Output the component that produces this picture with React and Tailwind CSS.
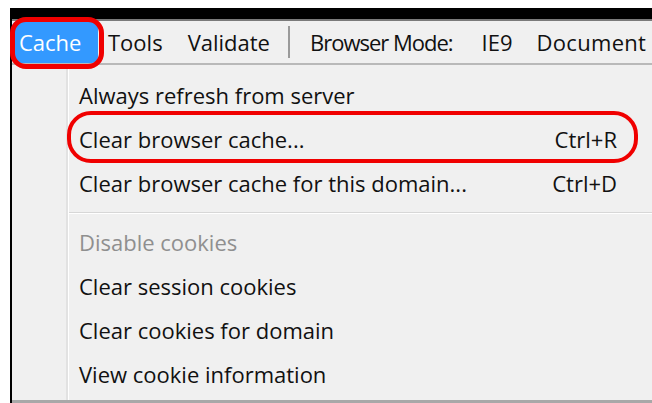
import React from "react";

const menuItems = [
  { label: "Always refresh from server" },
  { label: "Clear browser cache...", shortcut: "Ctrl+R", marked: true },
  { label: "Clear browser cache for this domain...", shortcut: "Ctrl+D" },
  { separator: true },
  { label: "Disable cookies", disabled: true },
  { label: "Clear session cookies" },
  { label: "Clear cookies for domain" },
  { label: "View cookie information" },
];

function MenuRow({ item }) {
  if (item.separator) {
    return (
      <div className="flex h-[15px] items-center">
        <div className="h-[2px] w-full border-t border-[#d7d7d7] border-b-white bg-white" />
      </div>
    );
  }
  return (
    <div
      className={`relative flex h-[44px] items-center pl-[10px] pr-[35px] ${
        item.disabled ? "text-[#8f8f8f]" : "text-[#111]"
      }`}
    >
      <span className="flex-1">{item.label}</span>
      {item.shortcut && <span>{item.shortcut}</span>}
      {item.marked && (
        <span className="pointer-events-none absolute top-[-6px] right-[14px] bottom-[-2px] left-[-2px] rounded-[24px] border-[4px] border-[#f00000]" />
      )}
    </div>
  );
}

export default function App() {
  return (
    <div
      className="h-[403px] w-[652px] overflow-hidden bg-white pt-[8px] pl-[10px] text-[22px] leading-none"
      style={{ fontFamily: '"Open Sans", "Noto Sans", sans-serif' }}
    >
      <div className="flex h-full flex-col border-l-[2px] border-black bg-[#f0f0f0]">
        {/* window title strip */}
        <div className="h-[11px] bg-black" />
        <div className="h-[2px] bg-[#7a7a7a]" />

        {/* menu bar */}
        <div className="flex h-[44px] items-center border-b-[2px] border-[#b9b9b9] text-[#111]">
          <div className="relative flex h-full w-[86px] items-center rounded-[6px] bg-[#3399ff] pl-[7px] text-white">
            Cache
            <span className="pointer-events-none absolute top-[-4px] right-[-6px] bottom-[-6px] left-[-2px] rounded-[16px] border-[5px] border-[#f00000]" />
          </div>
          <span className="ml-[10px]">Tools</span>
          <span className="ml-[25px]">Validate</span>
          <span className="ml-[18px] mr-[20px] h-[32px] w-[2px] bg-[#9a9a9a]" />
          <span className="tracking-[-1px]">Browser Mode:</span>
          <span className="ml-[29px]">IE9</span>
          <span className="ml-[24px] tracking-[0.3px]">Document</span>
        </div>

        {/* dropdown */}
        <div className="flex flex-1">
          <div className="w-[56px] border-r-[2px] border-[#e2e2e2]" />
          <div className="flex-1 pt-[8px] border-l border-white">
            {menuItems.map((item, i) => (
              <MenuRow key={i} item={item} />
            ))}
          </div>
        </div>
        <div className="h-[3px] bg-[#a8a8a8]" />
      </div>
    </div>
  );
}
